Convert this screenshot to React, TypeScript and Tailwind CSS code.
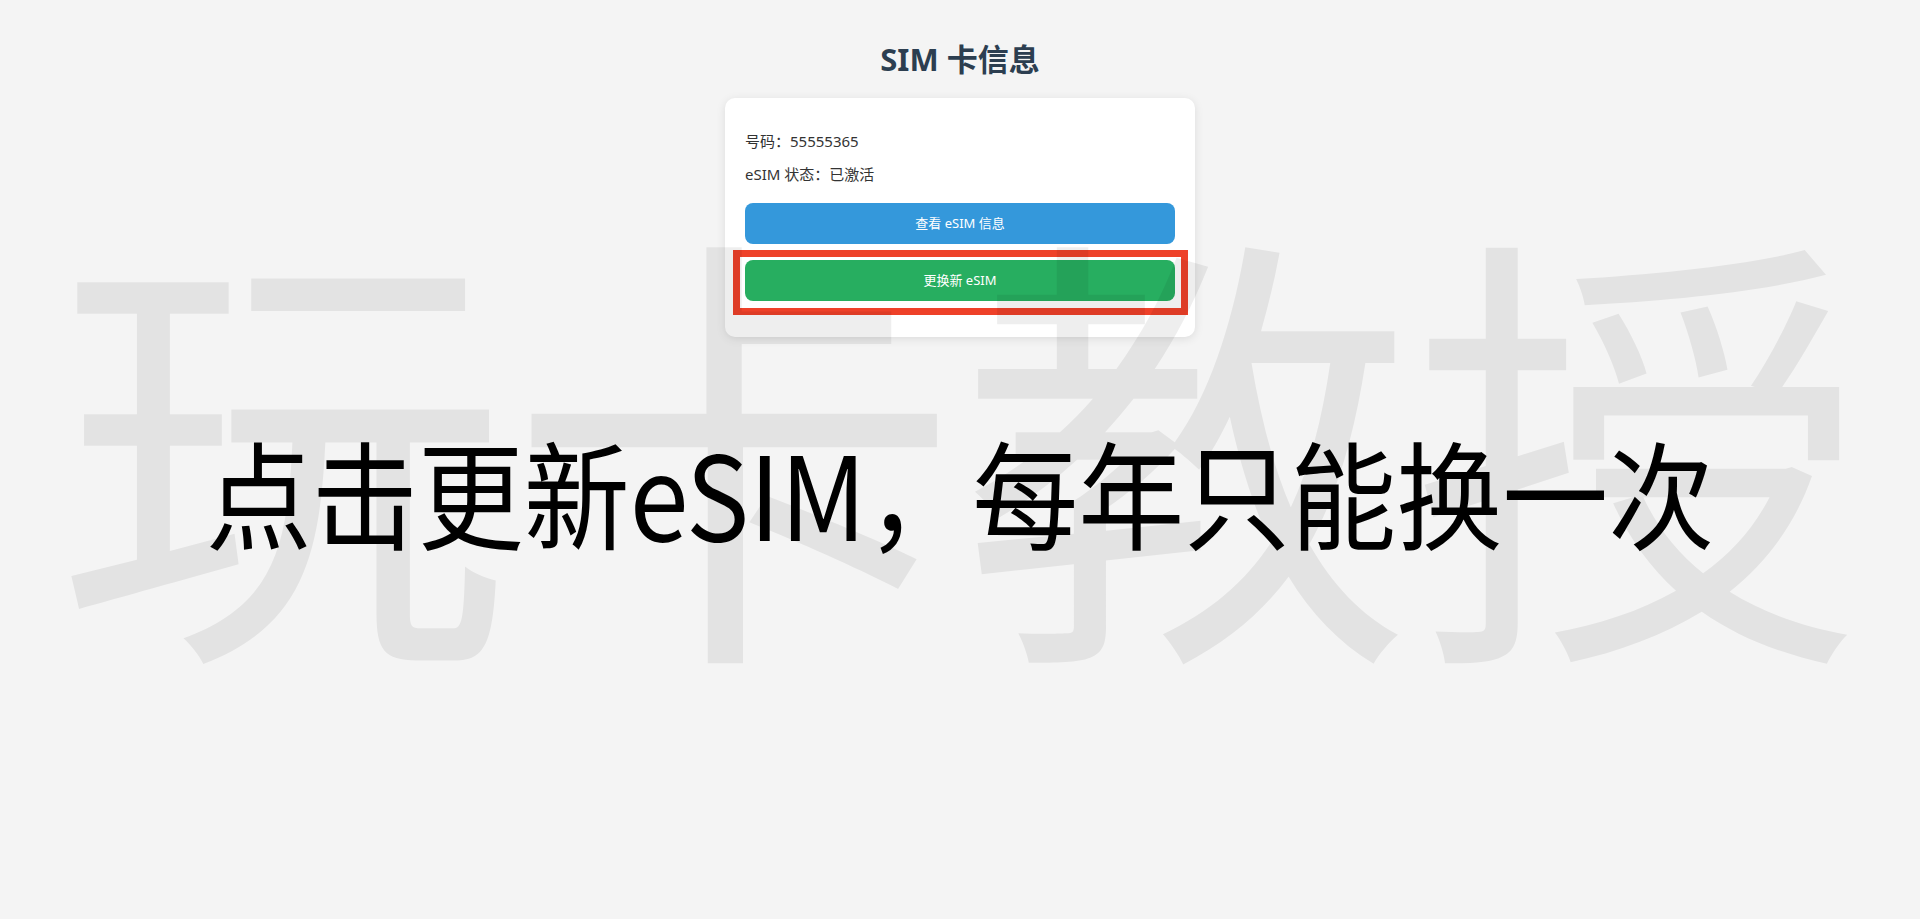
import React from "react"

const App: React.FC = () => {
  return (
    <div className="relative min-h-screen overflow-hidden bg-[#f4f4f4] font-['Noto_Sans','Noto_Sans_CJK_SC',sans-serif]">
      <div className="flex flex-col items-center pt-[39px]">
        <h1 className="text-[31px] font-bold leading-[40px] text-[#2c3e50]">SIM 卡信息</h1>

        <div className="mt-[19px] w-[470px] rounded-[10px] bg-white px-5 pt-[31px] pb-9 shadow-[0_2px_10px_rgba(0,0,0,0.1)]">
          <p className="text-[15px] leading-6 text-[#333]">号码：55555365</p>
          <p className="mt-[9px] text-[15px] leading-6 text-[#333]">eSIM 状态：已激活</p>

          <button className="mt-[17px] h-[41px] w-full rounded-lg bg-[#3498db] text-[13px] text-white">
            查看 eSIM 信息
          </button>

          <div className="relative mt-4">
            <button className="h-[41px] w-full rounded-lg bg-[#27ae60] text-[13px] text-white">
              更换新 eSIM
            </button>
            {/* highlight box */}
            <div className="pointer-events-none absolute -top-[10px] -right-[13px] -bottom-[14px] -left-3 border-[7px] border-[#ee4129]" />
          </div>
        </div>
      </div>

      {/* watermark */}
      <div className="pointer-events-none absolute inset-x-0 top-[204px] text-center">
        <span className="whitespace-nowrap font-['Noto_Sans_CJK_SC',sans-serif] text-[452px] leading-none text-black/[0.065]">
          玩卡教授
        </span>
      </div>

      {/* caption */}
      <div className="pointer-events-none absolute inset-x-0 top-[437px] flex justify-center">
        <span className="scale-y-[1.1] whitespace-nowrap font-['Noto_Sans_CJK_SC',sans-serif] text-[106px] leading-none text-black">
          点击更新eSIM，每年只能换一次
        </span>
      </div>
    </div>
  )
}

export default App
